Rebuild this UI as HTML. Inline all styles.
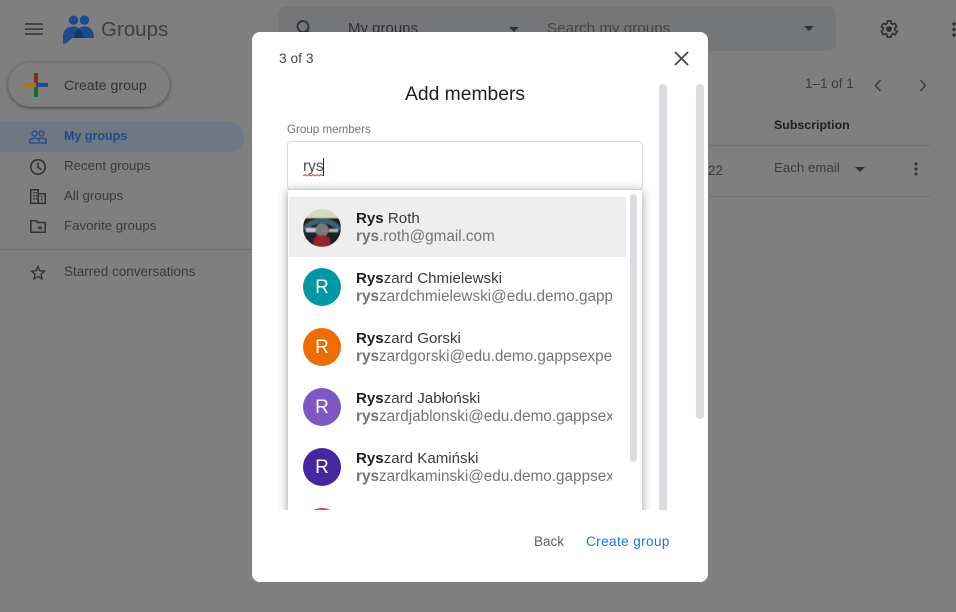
<!DOCTYPE html>
<html><head><meta charset="utf-8"><style>
html,body{margin:0;padding:0}
body{width:956px;height:612px;overflow:hidden;position:relative;background:#7f7f7f;font-family:"Liberation Sans",sans-serif;color:#3c3c3c}
.t{position:absolute;white-space:nowrap;line-height:16px}
svg{position:absolute;display:block}
#dlg{position:absolute;left:252px;top:32px;width:456px;height:550px;background:#fff;border-radius:8px;overflow:hidden}
#list{position:absolute;left:36px;top:157px;width:354px;height:345px;background:#fff;box-shadow:0 2px 10px rgba(0,0,0,.4);overflow:hidden;border-top:1px solid #d0d0d0;box-sizing:border-box}
.n{position:absolute;left:68px;font-size:15.1px;line-height:18px;color:#3a3a3a;white-space:nowrap}
.n b,.m b{font-weight:bold}
.n b{color:#202124}
.m{position:absolute;left:68px;width:256px;overflow:hidden;font-size:15.3px;line-height:18px;color:#70757a;white-space:nowrap}
.a{position:absolute;left:15px;width:38px;height:38px;border-radius:50%;color:#fff;font-size:19px;line-height:40px;text-align:center}
.bar{position:absolute;background:#dadce0;border-radius:4px}
</style></head><body>
<svg style="left:25px;top:23px" width="18" height="12"><path d="M0 1h18M0 6h18M0 11h18" stroke="#2f3033" stroke-width="1.6"/></svg>
<svg style="left:63px;top:15px" width="32" height="29" viewBox="0 0 32 29"><circle cx="10.500" cy="5.200" r="4.700" fill="#1d4a8c"/><circle cx="21.500" cy="5.200" r="4.700" fill="#1d4a8c"/><path d="M0 28.500V21C0 15 5 11.500 10.500 11.500C13 11.500 15 12.500 16 13.500C17 12.500 19 11.500 21.500 11.500C27 11.500 31 15 31 23H9.500L2.500 28.800Z" fill="#1d4a8c"/><path d="M11.500 23C11.500 18 14 15 16 13.800C18 15 20.500 18 20.500 23Z" fill="#153768"/></svg>
<div class="t" style="left:101px;top:17px;font-size:20.5px;line-height:26px;color:#3d3f42">Groups</div>
<div style="position:absolute;left:8px;top:62px;width:162px;height:45px;border-radius:23px;background:#7f7f7f;box-shadow:0 1px 3px rgba(0,0,0,.45);border:1px solid #767676;box-sizing:border-box"></div>
<svg style="left:24px;top:73px" width="24" height="24"><rect x="10" y="0" width="4" height="12" fill="#8e2a24"/><rect x="12" y="10" width="12" height="4" fill="#1f4a8c"/><rect x="10" y="12" width="4" height="12" fill="#1b6a32"/><rect x="0" y="10" width="12" height="4" fill="#a17f0b"/></svg>
<div class="t" style="left:64px;top:78px;font-size:14.2px;color:#333">Create group</div>
<div style="position:absolute;left:0;top:122px;width:244px;height:30px;background:#6f7784;border-radius:0 15px 15px 0"></div>
<svg style="left:29px;top:129px" width="18" height="16" fill="none" stroke="#1f4a8c" stroke-width="1.2"><circle cx="5.500" cy="4.500" r="2.500"/><circle cx="12.500" cy="4.500" r="2.500"/><path d="M.6 14V12C.6 10 3 9 5.500 9C8 9 10 10 10 12V14ZM10 14H17.400V12C17.400 10 15 9 12.500 9C11 9 10 9.400 9.200 10"/></svg>
<div class="t" style="left:64px;top:128px;font-size:12.500px;font-weight:bold;color:#1f4a8c">My groups</div>
<svg style="left:29px;top:158px" width="18" height="18" fill="none" stroke="#2f3033" stroke-width="1.500"><circle cx="9" cy="9" r="7.200"/><path d="M9 4.500V9.500L12.500 11.500"/></svg>
<div class="t" style="left:64px;top:158px;font-size:13.300px;color:#3a3a3a">Recent groups</div>
<svg style="left:30px;top:189px" width="16" height="15" fill="#2f3033"><path d="M0 0H9V4H16V15H0ZM1.500 1.500V13.500H7.500V1.500ZM9 5.500V13.500H14.500V5.500Z"/><rect x="3" y="3" width="1.500" height="1.500"/><rect x="5.500" y="3" width="1.500" height="1.500"/><rect x="3" y="6" width="1.500" height="1.500"/><rect x="5.500" y="6" width="1.500" height="1.500"/><rect x="3" y="9" width="1.500" height="1.500"/><rect x="5.500" y="9" width="1.500" height="1.500"/><rect x="11" y="7" width="1.500" height="1.500"/><rect x="11" y="10" width="1.500" height="1.500"/></svg>
<div class="t" style="left:64px;top:188px;font-size:13.300px;color:#3a3a3a">All groups</div>
<svg style="left:30px;top:220px" width="16" height="13"><path d="M.8.800H6L7.500 2.500H15.200V12.200H.8Z" fill="none" stroke="#2f3033" stroke-width="1.500"/><path d="M10 5L10.800 7H12.800L11.200 8.200L11.800 10L10 8.900L8.200 10L8.800 8.200L7.200 7H9.200Z" fill="#2f3033"/></svg>
<div class="t" style="left:64px;top:218px;font-size:13.300px;color:#3a3a3a">Favorite groups</div>
<div style="position:absolute;left:0;top:249px;width:252px;height:1px;background:#6f6f6f"></div>
<svg style="left:30px;top:265px" width="16" height="15"><path d="M8 1.500L9.800 5.800L14.500 6.200L11 9.300L12 13.900L8 11.500L4 13.900L5 9.300L1.500 6.200L6.200 5.800Z" fill="none" stroke="#2f3033" stroke-width="1.300"/></svg>
<div class="t" style="left:64px;top:264px;font-size:13.500px;color:#3a3a3a">Starred conversations</div>

<div style="position:absolute;left:278px;top:6px;width:558px;height:45px;background:#757678;border-radius:8px"></div>
<svg style="left:295px;top:19px" width="18" height="18" fill="none" stroke="#2f3033" stroke-width="1.700"><circle cx="8" cy="7.500" r="5.500"/><path d="M12 11.500L17 16.500"/></svg>
<div class="t" style="left:348px;top:21px;font-size:15px;color:#2f3033">My groups</div>
<svg style="left:509px;top:27px" width="10" height="5"><path d="M0 0H10L5 5Z" fill="#2f3033"/></svg>
<div class="t" style="left:547px;top:21px;font-size:15.200px;color:#444">Search my groups</div>
<svg style="left:804px;top:26px" width="10" height="5"><path d="M0 0H10L5 5Z" fill="#2f3033"/></svg>
<svg style="left:878px;top:18px" width="22" height="22" viewBox="0 0 24 24"><path d="M19.400 13a7.600 7.600 0 0 0 0-2l2.100-1.600-2-3.500-2.500 1a7.600 7.600 0 0 0-1.700-1L15.400 3.200h-4l-.4 2.700a7.600 7.600 0 0 0-1.700 1l-2.500-1-2 3.500L6.900 11a7.600 7.600 0 0 0 0 2l-2.100 1.600 2 3.500 2.500-1a7.600 7.600 0 0 0 1.700 1l.4 2.700h4l.4-2.700a7.600 7.600 0 0 0 1.700-1l2.500 1 2-3.500Z" transform="translate(-1.100 0)" fill="none" stroke="#2f3033" stroke-width="1.800"/><circle cx="12" cy="12" r="3.200" fill="#2f3033"/></svg>
<svg style="left:952px;top:22px" width="4" height="15" fill="#2f3033"><circle cx="2" cy="2" r="1.700"/><circle cx="2" cy="7.500" r="1.700"/><circle cx="2" cy="13" r="1.700"/></svg>
<div class="t" style="left:805px;top:76px;font-size:13.500px;color:#3a3a3a">1–1 of 1</div>
<svg style="left:874px;top:79px" width="8" height="13" fill="none" stroke="#3a3a3a" stroke-width="1.500"><path d="M6.500 1L1.500 6.500L6.500 12"/></svg>
<svg style="left:919px;top:79px" width="8" height="13" fill="none" stroke="#3a3a3a" stroke-width="1.500"><path d="M1.500 1L6.500 6.500L1.500 12"/></svg>
<div class="t" style="left:774px;top:117px;font-size:12.400px;font-weight:bold;color:#222">Subscription</div>
<div style="position:absolute;left:708px;top:145px;width:222px;height:1px;background:#707070"></div>
<div style="position:absolute;left:708px;top:196px;width:222px;height:1px;background:#707070"></div>
<div class="t" style="left:708px;top:163px;font-size:13.500px;color:#3a3a3a">22</div>
<div class="t" style="left:774px;top:160px;font-size:13.300px;color:#3a3a3a">Each email</div>
<svg style="left:855px;top:167px" width="10" height="5"><path d="M0 0H10L5 5Z" fill="#2f3033"/></svg>
<svg style="left:914px;top:162px" width="4" height="14" fill="#2f3033"><circle cx="2" cy="2" r="1.500"/><circle cx="2" cy="7" r="1.500"/><circle cx="2" cy="12" r="1.500"/></svg>

<div id="dlg">
<div class="t" style="left:27px;top:19px;font-size:13.800px;color:#444">3 of 3</div>
<svg style="left:422px;top:19px" width="15" height="15" stroke="#444" stroke-width="1.800"><path d="M1 1L14 14M14 1L1 14"/></svg>
<div class="t" style="left:153px;top:52px;font-size:19.300px;line-height:22px;color:#202124">Add members</div>
<div class="t" style="left:35px;top:90px;font-size:11.600px;color:#70757a">Group members</div>
<div style="position:absolute;left:35px;top:109px;width:356px;height:49px;border:1px solid #dadce0;border-radius:4px;box-sizing:border-box"></div>
<div class="t" style="left:51px;top:127px;font-size:15.500px;line-height:16px;color:#4a4d50">rys</div>
<div style="position:absolute;left:71px;top:126px;width:1px;height:18px;background:#222"></div>
<svg style="left:51px;top:142px" width="20" height="3"><path d="M0 2L2 .5L4 2L6 .5L8 2L10 .5L12 2L14 .5L16 2L18 .5L20 2" fill="none" stroke="#d33" stroke-width=".8"/></svg>
<div class="bar" style="left:407px;top:52px;width:8px;height:440px"></div>
<div class="bar" style="left:444px;top:52px;width:8px;height:335px"></div>
<div id="list">
<div style="position:absolute;left:1px;top:7px;width:337px;height:60px;background:#eee"></div>
<svg style="left:15px;top:19px" width="38" height="38" viewBox="0 0 38 38"><defs><clipPath id="c"><circle cx="19" cy="19" r="19"/></clipPath><filter id="bl"><feGaussianBlur stdDeviation=".6"/></filter></defs><g clip-path="url(#c)"><g filter="url(#bl)"><rect width="38" height="38" fill="#1c2228"/><rect y="0" width="38" height="9" fill="#cfdcc0"/><path d="M0 20C5 6 33 6 38 20L34 22C29 12 9 12 4 22Z" fill="#3d6273"/><rect x="3" y="19" width="10" height="4" fill="#c3cacd"/><rect x="26" y="20" width="9" height="3" fill="#aab2b6"/><circle cx="19" cy="21" r="6.500" fill="#7a7a7a"/><path d="M11 38V30C14 25 24 25 27 30V38Z" fill="#94282a"/></g></g></svg>
<div class="n" style="top:20px"><b>Rys</b> Roth</div><div class="m" style="top:38px"><b>rys</b>.roth@gmail.com</div>
<div class="a" style="top:78px;background:#0097a7">R</div>
<div class="n" style="top:80px"><b>Rys</b>zard Chmielewski</div><div class="m" style="top:98px"><b>rys</b>zardchmielewski@edu.demo.gappsexpert.com</div>
<div class="a" style="top:138px;background:#ef6c00">R</div>
<div class="n" style="top:140px"><b>Rys</b>zard Gorski</div><div class="m" style="top:158px"><b>rys</b>zardgorski@edu.demo.gappsexpe</div>
<div class="a" style="top:198px;background:#7e57c2">R</div>
<div class="n" style="top:200px"><b>Rys</b>zard Jabłoński</div><div class="m" style="top:218px"><b>rys</b>zardjablonski@edu.demo.gappsexpert.com</div>
<div class="a" style="top:258px;background:#4527a0">R</div>
<div class="n" style="top:260px"><b>Rys</b>zard Kamiński</div><div class="m" style="top:278px"><b>rys</b>zardkaminski@edu.demo.gappsexpert.com</div>
<div class="a" style="top:318px;background:#e64a19"></div>
<div class="bar" style="left:342px;top:4px;width:7px;height:268px"></div>
</div>
<div style="position:absolute;left:0;top:478px;width:456px;height:72px;background:#fff"></div>
<div class="t" style="left:282px;top:502px;font-size:13.500px;color:#5f6368">Back</div>
<div class="t" style="left:334px;top:502px;font-size:13.500px;letter-spacing:.42px;color:#1a73e8">Create group</div>
</div>
</body></html>
